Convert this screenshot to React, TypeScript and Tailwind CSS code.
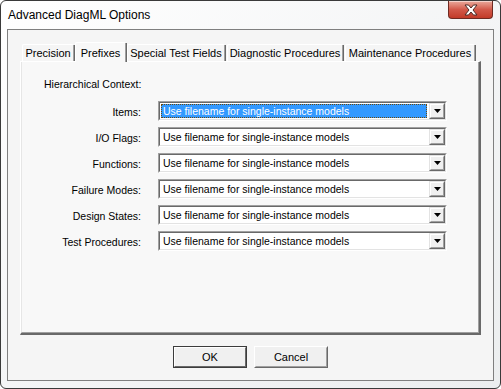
const rows = ["Items:", "I/O Flags:", "Functions:", "Failure Modes:", "Design States:", "Test Procedures:"];

const tabs = [
  { label: "Precision", cls: "ml-[2px] w-[52px]" },
  { label: "Prefixes", cls: "ml-[1px] w-[51px]", active: true },
  { label: "Special Test Fields", cls: "ml-[1px] w-[98px]" },
  { label: "Diagnostic Procedures", cls: "ml-[2px] w-[116px]" },
  { label: "Maintenance Procedures", cls: "ml-[2px] w-[130px]" },
];

function DropButton() {
  return (
    <div className="w-[16px] h-full border border-t-[#e3e3e3] border-l-[#e3e3e3] border-r-[#696969] border-b-[#696969] bg-[#f0f0f0]">
      <div className="w-full h-full flex items-center justify-center border border-t-white border-l-white border-r-[#a0a0a0] border-b-[#a0a0a0]">
        <svg width="7" height="4" viewBox="0 0 7 4">
          <polygon points="0,0 7,0 3.5,4" fill="#000" />
        </svg>
      </div>
    </div>
  );
}

function Combo({ selected }: { selected?: boolean }) {
  return (
    <div className="ml-[17px] w-[289px] h-[20px] border border-t-[#a0a0a0] border-l-[#a0a0a0] border-r-white border-b-white">
      <div className="h-full flex border border-t-[#696969] border-l-[#696969] border-r-[#e3e3e3] border-b-[#e3e3e3] bg-white">
        <div className="flex-1 flex p-px pr-[2px]">
          {selected ? (
            <div className="flex-1 flex items-center pl-px bg-[#3399ff] text-white border border-dotted border-[#6b4a10] leading-[12px]">
              Use filename for single-instance models
            </div>
          ) : (
            <div className="flex-1 flex items-center pl-[2px] text-black leading-[12px]">
              Use filename for single-instance models
            </div>
          )}
        </div>
        <DropButton />
      </div>
    </div>
  );
}

function Button({ label, isDefault }: { label: string; isDefault?: boolean }) {
  return (
    <div
      className={`w-[74px] h-[22px] border ${
        isDefault ? "border-[#3c3c3c]" : "border-t-white border-l-white border-r-[#696969] border-b-[#696969]"
      } bg-[#f0f0f0]`}
    >
      <div
        className={`w-full h-full flex items-center justify-center border ${
          isDefault
            ? "border-t-white border-l-white border-r-[#696969] border-b-[#696969]"
            : "border-t-[#f0f0f0] border-l-[#f0f0f0] border-r-[#a0a0a0] border-b-[#a0a0a0]"
        } text-black`}
      >
        {label}
      </div>
    </div>
  );
}

export default function App() {
  return (
    <div className="w-[501px] h-[389px] bg-white">
      <div
        className="w-full h-full flex flex-col border border-[#3a3a3a] rounded-[6px] bg-gradient-to-br from-[#ffffff] via-[#f4f5f6] to-[#eceeef] text-[10.5px]"
        style={{ fontFamily: '"Liberation Sans", Arial, sans-serif' }}
      >
        {/* Title bar */}
        <div className="h-[28px] flex items-start justify-between shrink-0">
          <div className="h-full flex items-center pl-[7px] text-[12px] text-black">Advanced DiagML Options</div>
          <div className="mr-[7px] w-[45px] h-[18px] rounded-b-[4px] border border-t-0 border-[#6e2a22] bg-gradient-to-b from-[#e9a99c] via-[#d2594a] to-[#c23a28] flex items-center justify-center shadow-[inset_0_1px_0_rgba(255,255,255,0.5)]">
            <svg width="14" height="12" viewBox="0 0 14 12">
              <path
                d="M1 1 H4.5 L7 4 L9.5 1 H13 L9 6 L13 11 H9.5 L7 8 L4.5 11 H1 L5 6 Z"
                fill="#ffffff"
                stroke="#4a2a26"
                strokeWidth="1"
                strokeLinejoin="round"
              />
            </svg>
          </div>
        </div>

        {/* Client area */}
        <div className="mx-[6px] mb-[7px] h-[352px] flex flex-col border border-[#7f7f7f] bg-[#f5f5f5] pt-[12px] pl-[12px]">
          {/* Tabs */}
          <div className="h-[19px] flex items-end text-[11px]">
            {tabs.map((t) =>
              t.active ? (
                <div
                  key={t.label}
                  className={`${t.cls} h-[20px] -mb-px relative z-10 flex border-t border-l border-white rounded-t-[2px] bg-[#f8f8f8]`}
                >
                  <div className="flex-1 flex items-start justify-center pt-[2px] border-r border-[#a0a0a0] shadow-[1px_0_0_#696969] text-black">
                    {t.label}
                  </div>
                </div>
              ) : (
                <div
                  key={t.label}
                  className={`${t.cls} h-[17px] flex border-t border-l border-white rounded-t-[2px] bg-[#f5f5f5]`}
                >
                  <div className="flex-1 flex items-center justify-center border-r border-[#a0a0a0] shadow-[1px_0_0_#696969] text-black">
                    {t.label}
                  </div>
                </div>
              )
            )}
          </div>

          {/* Tab panel */}
          <div className="w-[461px] h-[274px] border-t border-l border-white border-r-2 border-b-2 border-r-[#696969] border-b-[#696969] bg-[#f8f8f8]">
            <div className="h-full pt-[16px] border-r border-b border-[#a0a0a0] border-l border-l-[#e6e6e6]">
              <div className="pl-[22px] leading-[13px] text-black">Hierarchical Context:</div>
              <div className="mt-[10px] flex flex-col gap-[6px]">
                {rows.map((r, i) => (
                  <div key={r} className="flex items-center">
                    <div className="w-[119px] text-right text-black leading-[13px] pt-[3px]">{r}</div>
                    <Combo selected={i === 0} />
                  </div>
                ))}
              </div>
            </div>
          </div>

          {/* Buttons */}
          <div className="mt-[11px] pr-[12px] flex justify-center gap-[7px] text-[11px]">
            <Button label="OK" isDefault />
            <Button label="Cancel" />
          </div>
        </div>
      </div>
    </div>
  );
}
